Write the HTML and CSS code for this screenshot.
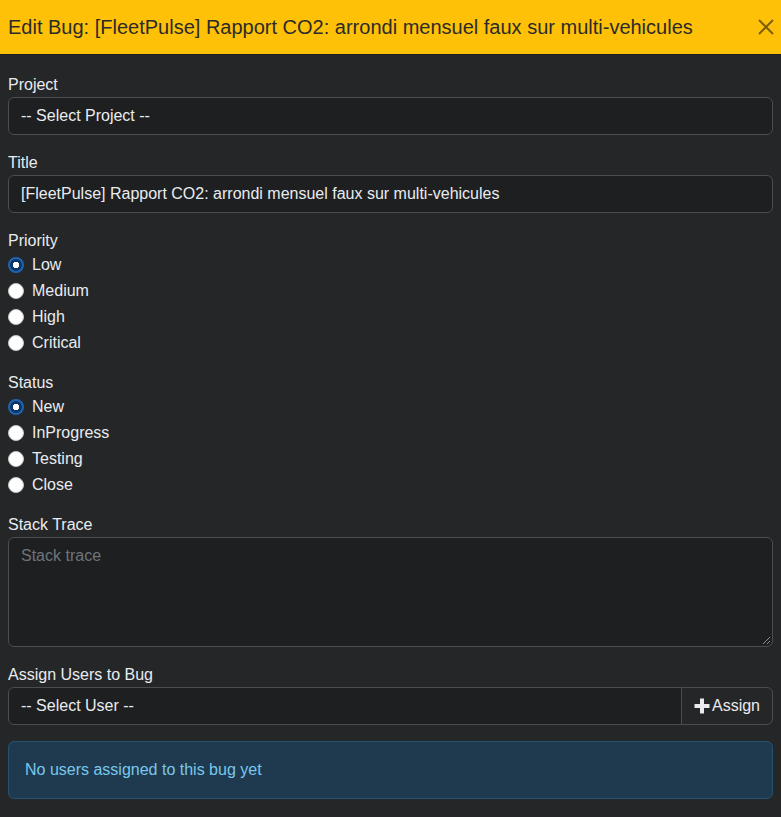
FILE: index.html
```html
<!DOCTYPE html>
<html>
<head>
    <link rel="stylesheet" href="styles.css">
</head>
<body>
    <div class="modal">
        <div class="modal-header">
            <h5 class="modal-title">Edit Bug: [FleetPulse] Rapport CO2: arrondi mensuel faux sur multi-vehicules</h5>
            <button class="btn-close" type="button" aria-label="Close">
                <svg width="16" height="16" viewBox="0 0 16 16">
                    <path d="M1 1 L15 15 M15 1 L1 15" stroke="#000" stroke-width="2" fill="none"/>
                </svg>
            </button>
        </div>

        <div class="modal-body">
            <div class="group">
                <label class="form-label">Project</label>
                <div class="form-control">-- Select Project --</div>
            </div>

            <div class="group">
                <label class="form-label">Title</label>
                <div class="form-control">[FleetPulse] Rapport CO2: arrondi mensuel faux sur multi-vehicules</div>
            </div>

            <div class="group">
                <label class="form-label">Priority</label>
                <div class="form-check"><span class="radio checked"></span>Low</div>
                <div class="form-check"><span class="radio"></span>Medium</div>
                <div class="form-check"><span class="radio"></span>High</div>
                <div class="form-check"><span class="radio"></span>Critical</div>
            </div>

            <div class="group">
                <label class="form-label">Status</label>
                <div class="form-check"><span class="radio checked"></span>New</div>
                <div class="form-check"><span class="radio"></span>InProgress</div>
                <div class="form-check"><span class="radio"></span>Testing</div>
                <div class="form-check"><span class="radio"></span>Close</div>
            </div>

            <div class="group">
                <label class="form-label">Stack Trace</label>
                <div class="form-control textarea">
                    <span class="placeholder">Stack trace</span>
                    <svg class="grip" width="9" height="9" viewBox="0 0 9 9">
                        <path d="M8 1 L1 8 M8 5 L5 8" stroke="#8a8d91" stroke-width="1" fill="none"/>
                    </svg>
                </div>
            </div>

            <div class="group">
                <label class="form-label">Assign Users to Bug</label>
                <div class="input-group">
                    <div class="form-control select-user">-- Select User --</div>
                    <button class="btn-assign" type="button">
                        <svg width="16" height="16" viewBox="0 0 16 16">
                            <path d="M6 0.5 H10 V6 H15.5 V10 H10 V15.5 H6 V10 H0.5 V6 H6 Z" fill="#e9ecef"/>
                        </svg>
                        Assign
                    </button>
                </div>
            </div>

            <div class="alert">No users assigned to this bug yet</div>
        </div>
    </div>
</body>
</html>
```

FILE: styles.css
```css
body {
    margin: 0;
    font-family: "Liberation Sans", Arial, sans-serif;
    font-size: 16px;
    line-height: 24px;
    color: #dee2e6;
    background: #252628;
}

.modal-header {
    display: flex;
    align-items: center;
    justify-content: space-between;
    padding: 12px 7px 12px 8px;
    background: #ffc107;
    border-bottom: 1px solid #1c1d1f;
}

.modal-title {
    margin: 0;
    font-size: 20px;
    font-weight: normal;
    line-height: 30px;
    color: #2b2b2b;
}

.btn-close {
    display: flex;
    padding: 0;
    border: none;
    background: none;
    opacity: 0.5;
}

.modal-body {
    padding: 18px 8px 16px;
}

.group {
    margin-bottom: 16px;
}

.form-label {
    display: block;
    color: #e9ecef;
}

.form-control {
    box-sizing: border-box;
    height: 38px;
    padding: 6px 12px;
    background: #1e1f21;
    border: 1px solid #4b4d51;
    border-radius: 6px;
    color: #e9ecef;
}

.textarea {
    position: relative;
    height: 110px;
}

.placeholder {
    color: #6f747a;
}

.grip {
    position: absolute;
    right: 1px;
    bottom: 1px;
}

.form-check {
    display: flex;
    align-items: center;
    gap: 8px;
    margin-bottom: 2px;
    color: #e9ecef;
}

.form-check:last-child {
    margin-bottom: 0;
}

.radio {
    box-sizing: border-box;
    width: 16px;
    height: 16px;
    border-radius: 50%;
    background: #ffffff;
    border: 1px solid #c8c8c8;
}

.radio.checked {
    background: radial-gradient(circle, #ffffff 0 3px, #0b3566 3.5px);
    border: 2px solid #1d64b5;
}

.input-group {
    display: flex;
}

.select-user {
    flex: 1;
    border-radius: 6px 0 0 6px;
}

.btn-assign {
    display: flex;
    align-items: center;
    gap: 2px;
    height: 38px;
    padding: 0 12px;
    margin-left: -1px;
    background: #252628;
    border: 1px solid #4b4d51;
    border-radius: 0 6px 6px 0;
    font-family: inherit;
    font-size: 16px;
    color: #e9ecef;
}

.alert {
    padding: 16px;
    background: #1f3a4f;
    border: 1px solid #27526f;
    border-radius: 6px;
    color: #79c8ec;
}
```
